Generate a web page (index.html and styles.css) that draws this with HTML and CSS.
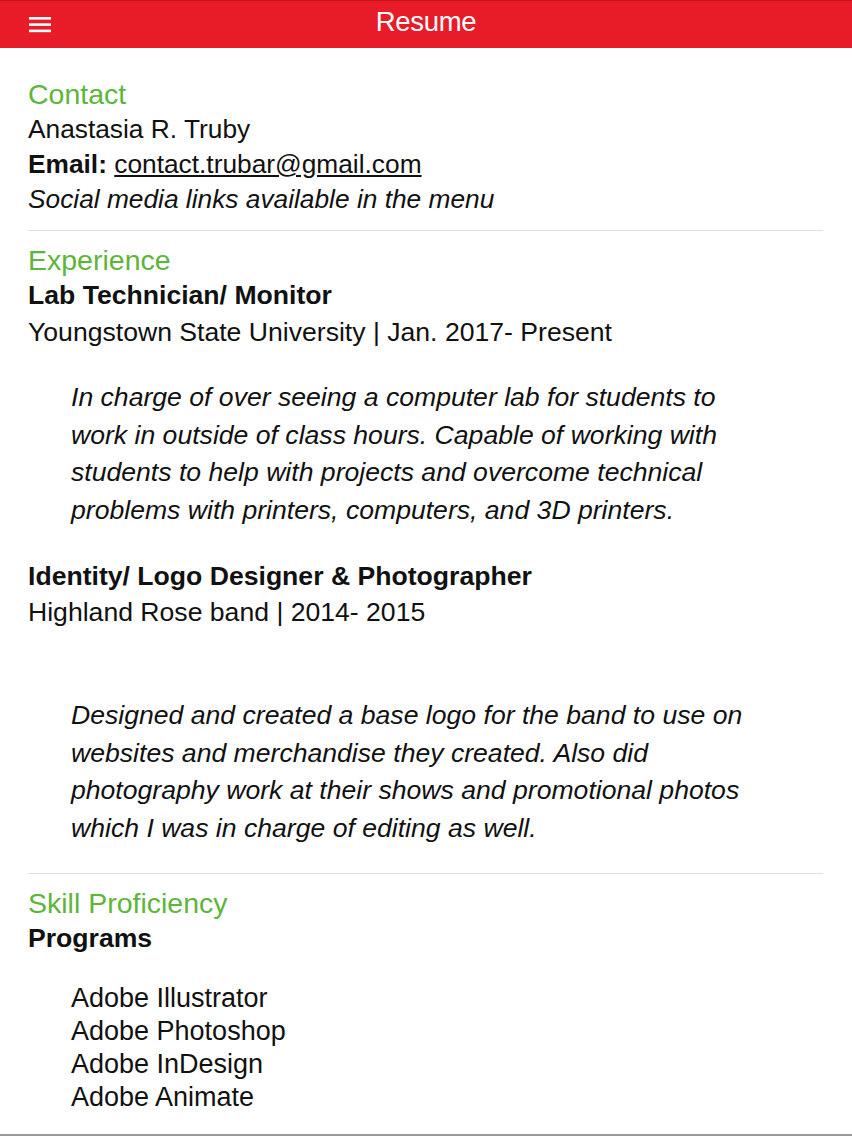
FILE: index.html
```html
<!DOCTYPE html>
<html>
<head>
<meta charset="utf-8">
<link rel="stylesheet" href="styles.css">
</head>
<body>
<header class="bar">
  <svg class="menu" width="22" height="17" viewBox="0 0 22 17"><rect x="0" y="1" width="22" height="2.6" fill="#fff"/><rect x="0" y="7.3" width="22" height="2.6" fill="#fff"/><rect x="0" y="13.6" width="22" height="2.6" fill="#fff"/></svg>
  <div class="title">Resume</div>
</header>
<main class="content">
  <section class="sec">
    <h2 class="head">Contact</h2>
    <div class="line contact">Anastasia R. Truby</div>
    <div class="line contact"><b>Email:</b> <a class="mail" href="#">contact.trubar@gmail.com</a></div>
    <div class="line contact"><i>Social media links available in the menu</i></div>
  </section>
  <hr class="sep">
  <section class="sec">
    <h2 class="head">Experience</h2>
    <div class="line job">Lab Technician/ Monitor</div>
    <div class="line sub">Youngstown State University | Jan. 2017- Present</div>
    <p class="desc">In charge of over seeing a computer lab for students to<br>work in outside of class hours. Capable of working with<br>students to help with projects and overcome technical<br>problems with printers, computers, and 3D printers.</p>
    <div class="line job">Identity/ Logo Designer &amp; Photographer</div>
    <div class="line sub2">Highland Rose band | 2014- 2015</div>
    <p class="desc desc2">Designed and created a base logo for the band to use on<br>websites and merchandise they created. Also did<br>photography work at their shows and promotional photos<br>which I was in charge of editing as well.</p>
  </section>
  <hr class="sep sep2">
  <section class="sec">
    <h2 class="head">Skill Proficiency</h2>
    <div class="line job">Programs</div>
    <ul class="list">
      <li>Adobe Illustrator</li>
      <li>Adobe Photoshop</li>
      <li>Adobe InDesign</li>
      <li>Adobe Animate</li>
    </ul>
  </section>
</main>
<div class="bottom"></div>
</body>
</html>
```
FILE: styles.css
```css
html, body {
  margin: 0;
  padding: 0;
  background: #fff;
}
body {
  width: 852px;
  height: 1136px;
  position: relative;
  overflow: hidden;
  font-family: "Liberation Sans", Arial, sans-serif;
  color: #111;
}
.bar {
  height: 48px;
  background: #e81b28;
  border-top: 1px solid #c8141f;
  box-sizing: border-box;
  display: flex;
  align-items: center;
  justify-content: center;
  position: relative;
}
.menu {
  position: absolute;
  left: 29px;
  top: 15px;
}
.title {
  color: #fff;
  font-size: 27.5px;
  font-weight: 300;
  margin-top: -5px;
  letter-spacing: -0.3px;
}
.content {
  padding: 29px 29px 0 28px;
}
.sec { margin: 0; }
.head {
  margin: 0;
  font-weight: normal;
  font-size: 28.5px;
  line-height: 35px;
  color: #5db53a;
}
.line {
  font-size: 26.6px;
  line-height: 35px;
}
.contact { font-size: 26.3px; }
.job { font-weight: bold; }
.sub { margin-top: 2px; }
.sub2 { margin-top: 1px; }
.mail { color: #111; text-decoration: underline; }
.desc {
  margin: 29px 0 29px 43px;
  font-size: 26.6px;
  line-height: 37.7px;
  font-style: italic;
}
.desc2 { margin-top: 67px; margin-bottom: 0; }
.sep {
  border: 0;
  height: 1px;
  background: #e0e0e0;
  margin: 13px 0 12px 0;
}
.sep2 { margin-top: 25px; }
.list {
  list-style: none;
  margin: 26px 0 0 43px;
  padding: 0;
  font-size: 27px;
  line-height: 33px;
}
.bottom {
  position: absolute;
  left: 0;
  right: 0;
  bottom: 0;
  height: 2px;
  background: #9a9a9a;
}
```
